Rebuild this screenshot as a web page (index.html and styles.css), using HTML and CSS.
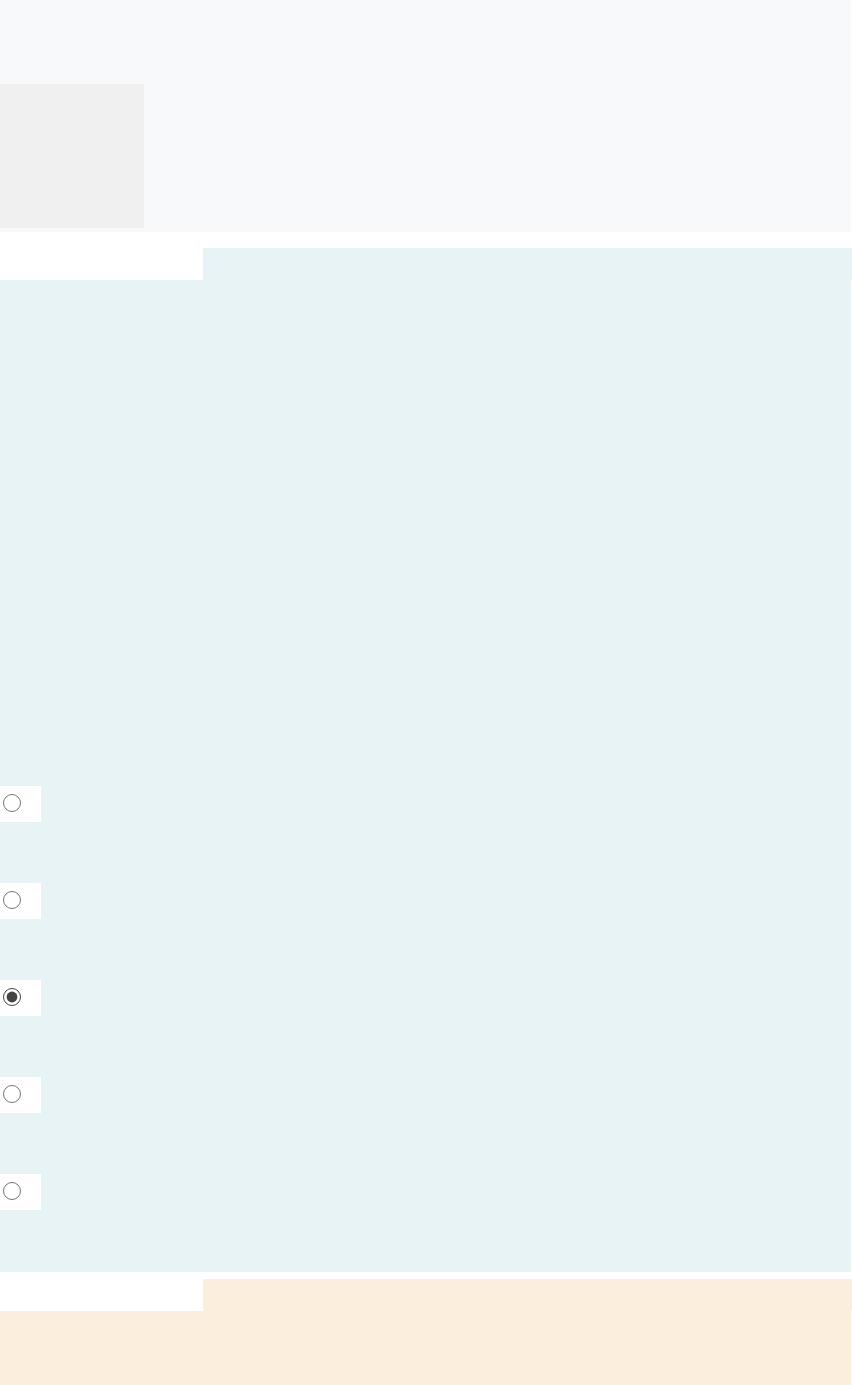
FILE: index.html
```html
<!DOCTYPE html>
<html lang="en">
<head>
    <meta charset="UTF-8">
    <meta name="viewport" content="width=device-width, initial-scale=1.0">
    <title>Survey</title>
    <link rel="stylesheet" href="styles.css">
</head>
<body>

    <div id="header-panel">
        <div id="header-image"></div>
        <div id="header-strip"></div>
    </div>

    <div class="tab-row">
        <div class="tab-spacer"></div>
        <div class="tab tab-teal"></div>
    </div>
    <div class="panel panel-teal" id="question-panel">
        <label class="option"><input type="radio" name="answer" value="1"></label>
        <label class="option"><input type="radio" name="answer" value="2"></label>
        <label class="option"><input type="radio" name="answer" value="3" checked></label>
        <label class="option"><input type="radio" name="answer" value="4"></label>
        <label class="option"><input type="radio" name="answer" value="5"></label>
    </div>

    <div class="tab-row tab-row-second">
        <div class="tab-spacer"></div>
        <div class="tab tab-orange"></div>
    </div>
    <div class="panel panel-orange" id="footer-panel"></div>

</body>
</html>
```

FILE: styles.css
```css
body {
    font-family: "Liberation Sans", Arial, sans-serif;
    background-color: #FFFFFF;
    margin: 0;
    padding: 0;
    width: 852px;
    min-height: 1385px;
    display: flex;
    flex-direction: column;
}

#header-panel {
    width: 851px;
    background-color: #F8F9FB;
    padding-top: 84px;
    display: flex;
    flex-direction: column;
}

#header-image {
    width: 144px;
    height: 144px;
    background-color: #F0F0F0;
}

#header-strip {
    height: 4px;
    background-color: #F9F9F9;
}

.tab-row {
    display: flex;
    margin-top: 16px;
    height: 32px;
}

.tab-row-second {
    margin-top: 7px;
}

.tab-spacer {
    width: 203px;
}

.tab {
    flex: 1;
}

.tab-teal {
    background-color: #E7F3F5;
}

.tab-orange {
    background-color: #FBEEDC;
}

.panel {
    width: 851px;
}

.panel-teal {
    background-color: #E7F3F5;
    padding: 506px 0 62px 0;
    display: flex;
    flex-direction: column;
    gap: 61px;
}

.panel-orange {
    background-color: #FBEEDC;
    flex: 1;
}

.option {
    display: flex;
    align-items: flex-start;
    width: 41px;
    height: 36px;
    background-color: #FFFFFF;
}

.option input {
    width: 18px;
    height: 18px;
    margin: 8px 0 0 3px;
    accent-color: #444444; /* grey radios like the screenshot */
}
```
